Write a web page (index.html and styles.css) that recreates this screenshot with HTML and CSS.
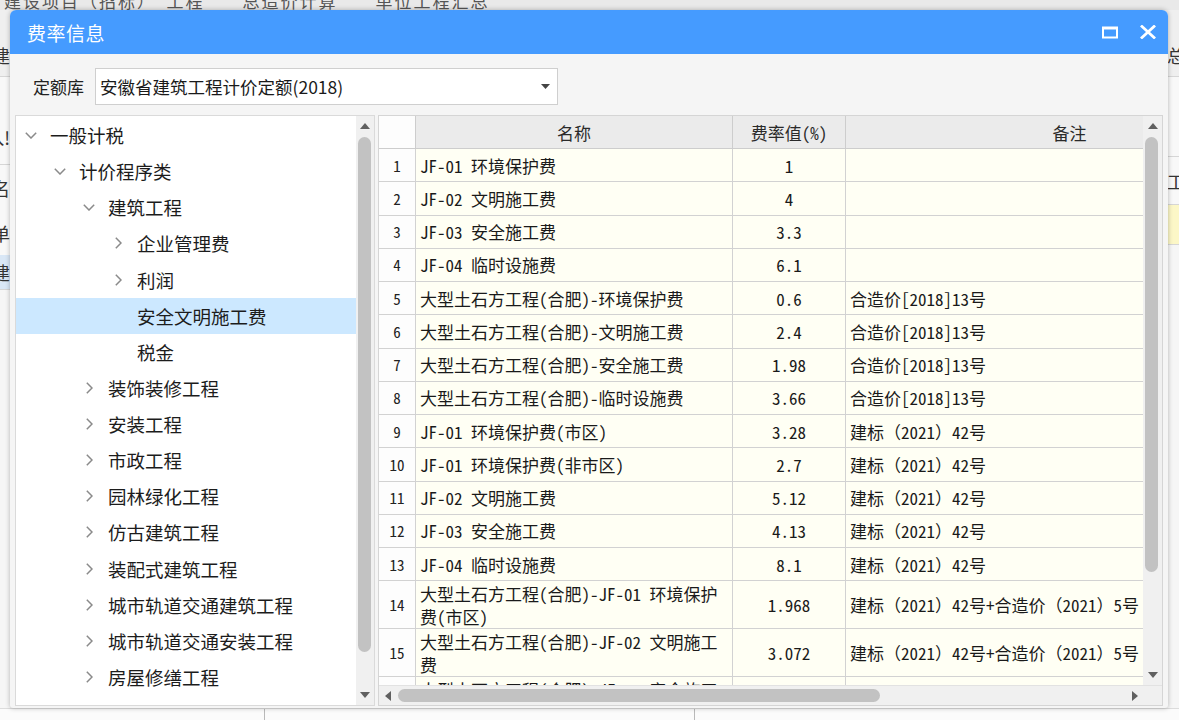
FILE: index.html
```html
<!DOCTYPE html>
<html lang="zh-CN">
<head>
<meta charset="utf-8">
<title>费率信息</title>
<link rel="stylesheet" href="styles.css">
</head>
<body>
<div class="app">
  <div class="app-top"><span class="app-top-text">建设项目（招标）　工程　　总造价计算　　单位工程汇总</span></div>
  <div class="app-mid">
    <div class="app-left">
      <div class="bg-cell h67"><span>总建</span></div>
      <div class="bg-cell h88"><span>导入!</span></div>
      <div class="bg-cell h45"><span>名</span></div>
      <div class="bg-cell h45"><span>单</span></div>
      <div class="bg-cell h35 sel"><span>建</span></div>
      <div class="bg-fill"></div>
    </div>
    <div class="app-right">
      <div class="bg-cell h67 left"><span>总造</span></div>
      <div class="bg-cell h80 left plain"><span></span></div>
      <div class="bg-cell h48 left"><span>工时</span></div>
      <div class="bg-cell h40 yellow left"><span></span></div>
      <div class="bg-fill"></div>
    </div>
  </div>
  <div class="app-bottom"><div class="bb1"></div><div class="bb2"></div><div class="bb3"></div></div>
</div>

<div class="dialog">
  <div class="titlebar">
    <div class="title">费率信息</div>
    <div class="tb-btns">
      <svg class="tb-icon" width="16" height="13" viewBox="0 0 16 13"><rect x="1" y="1.5" width="14" height="10" fill="none" stroke="#fff" stroke-width="2"/><rect x="1" y="1" width="14" height="2.5" fill="#fff"/></svg>
      <svg class="tb-icon" width="16" height="14" viewBox="0 0 16 14"><path d="M2 1.5 L14 12.5 M14 1.5 L2 12.5" stroke="#fff" stroke-width="2.8" stroke-linecap="square"/></svg>
    </div>
  </div>

  <div class="toolbar">
    <span class="label">定额库</span>
    <div class="select">
      <span class="select-text">安徽省建筑工程计价定额(2018)</span>
      <svg width="9" height="5" viewBox="0 0 9 5"><path d="M0 0 H9 L4.5 5 Z" fill="#444"/></svg>
    </div>
  </div>

  <div class="panels">
    <div class="tree">
      <div class="tree-list">
        <div class="node l0"><span class="tw"><svg width="12" height="7" viewBox="0 0 12 7"><polyline points="0.8,0.8 6,6 11.2,0.8" fill="none" stroke="#8a8a8a" stroke-width="1.5"/></svg></span>一般计税</div>
        <div class="node l1"><span class="tw"><svg width="12" height="7" viewBox="0 0 12 7"><polyline points="0.8,0.8 6,6 11.2,0.8" fill="none" stroke="#8a8a8a" stroke-width="1.5"/></svg></span>计价程序类</div>
        <div class="node l2"><span class="tw"><svg width="12" height="7" viewBox="0 0 12 7"><polyline points="0.8,0.8 6,6 11.2,0.8" fill="none" stroke="#8a8a8a" stroke-width="1.5"/></svg></span>建筑工程</div>
        <div class="node l3"><span class="tw"><svg class="chev-r" width="7" height="12" viewBox="0 0 7 12"><polyline points="0.8,0.8 6,6 0.8,11.2" fill="none" stroke="#8a8a8a" stroke-width="1.5"/></svg></span>企业管理费</div>
        <div class="node l3"><span class="tw"><svg class="chev-r" width="7" height="12" viewBox="0 0 7 12"><polyline points="0.8,0.8 6,6 0.8,11.2" fill="none" stroke="#8a8a8a" stroke-width="1.5"/></svg></span>利润</div>
        <div class="node l3 selected"><span class="tw"></span>安全文明施工费</div>
        <div class="node l3"><span class="tw"></span>税金</div>
        <div class="node l2"><span class="tw"><svg class="chev-r" width="7" height="12" viewBox="0 0 7 12"><polyline points="0.8,0.8 6,6 0.8,11.2" fill="none" stroke="#8a8a8a" stroke-width="1.5"/></svg></span>装饰装修工程</div>
        <div class="node l2"><span class="tw"><svg class="chev-r" width="7" height="12" viewBox="0 0 7 12"><polyline points="0.8,0.8 6,6 0.8,11.2" fill="none" stroke="#8a8a8a" stroke-width="1.5"/></svg></span>安装工程</div>
        <div class="node l2"><span class="tw"><svg class="chev-r" width="7" height="12" viewBox="0 0 7 12"><polyline points="0.8,0.8 6,6 0.8,11.2" fill="none" stroke="#8a8a8a" stroke-width="1.5"/></svg></span>市政工程</div>
        <div class="node l2"><span class="tw"><svg class="chev-r" width="7" height="12" viewBox="0 0 7 12"><polyline points="0.8,0.8 6,6 0.8,11.2" fill="none" stroke="#8a8a8a" stroke-width="1.5"/></svg></span>园林绿化工程</div>
        <div class="node l2"><span class="tw"><svg class="chev-r" width="7" height="12" viewBox="0 0 7 12"><polyline points="0.8,0.8 6,6 0.8,11.2" fill="none" stroke="#8a8a8a" stroke-width="1.5"/></svg></span>仿古建筑工程</div>
        <div class="node l2"><span class="tw"><svg class="chev-r" width="7" height="12" viewBox="0 0 7 12"><polyline points="0.8,0.8 6,6 0.8,11.2" fill="none" stroke="#8a8a8a" stroke-width="1.5"/></svg></span>装配式建筑工程</div>
        <div class="node l2"><span class="tw"><svg class="chev-r" width="7" height="12" viewBox="0 0 7 12"><polyline points="0.8,0.8 6,6 0.8,11.2" fill="none" stroke="#8a8a8a" stroke-width="1.5"/></svg></span>城市轨道交通建筑工程</div>
        <div class="node l2"><span class="tw"><svg class="chev-r" width="7" height="12" viewBox="0 0 7 12"><polyline points="0.8,0.8 6,6 0.8,11.2" fill="none" stroke="#8a8a8a" stroke-width="1.5"/></svg></span>城市轨道交通安装工程</div>
        <div class="node l2"><span class="tw"><svg class="chev-r" width="7" height="12" viewBox="0 0 7 12"><polyline points="0.8,0.8 6,6 0.8,11.2" fill="none" stroke="#8a8a8a" stroke-width="1.5"/></svg></span>房屋修缮工程</div>
        <div class="node l1"><span class="tw"></span>增值税类</div>
      </div>
      <div class="vscroll">
        <div class="sb-btn"><svg width="10" height="6" viewBox="0 0 10 6"><path d="M0 6 H10 L5 0 Z" fill="#606060"/></svg></div>
        <div class="sb-track"><div class="thumb-v tree-thumb"></div></div>
        <div class="sb-btn"><svg width="10" height="6" viewBox="0 0 10 6"><path d="M0 0 H10 L5 6 Z" fill="#606060"/></svg></div>
      </div>
    </div>

    <div class="grid">
      <div class="grid-main">
        <div class="grid-view">
          <div class="row head">
            <div class="c num"></div>
            <div class="c name">名称</div>
            <div class="c rate">费率值(%)</div>
            <div class="c note">备注</div>
          </div>
          <div class="row"><div class="c num">1</div><div class="c name">JF-01 环境保护费</div><div class="c rate">1</div><div class="c note"></div></div>
          <div class="row"><div class="c num">2</div><div class="c name">JF-02 文明施工费</div><div class="c rate">4</div><div class="c note"></div></div>
          <div class="row"><div class="c num">3</div><div class="c name">JF-03 安全施工费</div><div class="c rate">3.3</div><div class="c note"></div></div>
          <div class="row"><div class="c num">4</div><div class="c name">JF-04 临时设施费</div><div class="c rate">6.1</div><div class="c note"></div></div>
          <div class="row"><div class="c num">5</div><div class="c name">大型土石方工程(合肥)-环境保护费</div><div class="c rate">0.6</div><div class="c note">合造价[2018]13号</div></div>
          <div class="row"><div class="c num">6</div><div class="c name">大型土石方工程(合肥)-文明施工费</div><div class="c rate">2.4</div><div class="c note">合造价[2018]13号</div></div>
          <div class="row"><div class="c num">7</div><div class="c name">大型土石方工程(合肥)-安全施工费</div><div class="c rate">1.98</div><div class="c note">合造价[2018]13号</div></div>
          <div class="row"><div class="c num">8</div><div class="c name">大型土石方工程(合肥)-临时设施费</div><div class="c rate">3.66</div><div class="c note">合造价[2018]13号</div></div>
          <div class="row"><div class="c num">9</div><div class="c name">JF-01 环境保护费(市区)</div><div class="c rate">3.28</div><div class="c note">建标（2021）42号</div></div>
          <div class="row"><div class="c num">10</div><div class="c name">JF-01 环境保护费(非市区)</div><div class="c rate">2.7</div><div class="c note">建标（2021）42号</div></div>
          <div class="row"><div class="c num">11</div><div class="c name">JF-02 文明施工费</div><div class="c rate">5.12</div><div class="c note">建标（2021）42号</div></div>
          <div class="row"><div class="c num">12</div><div class="c name">JF-03 安全施工费</div><div class="c rate">4.13</div><div class="c note">建标（2021）42号</div></div>
          <div class="row"><div class="c num">13</div><div class="c name">JF-04 临时设施费</div><div class="c rate">8.1</div><div class="c note">建标（2021）42号</div></div>
          <div class="row tall"><div class="c num">14</div><div class="c name">大型土石方工程(合肥)-JF-01 环境保护<br>费(市区)</div><div class="c rate">1.968</div><div class="c note">建标（2021）42号+合造价（2021）5号</div></div>
          <div class="row tall"><div class="c num">15</div><div class="c name">大型土石方工程(合肥)-JF-02 文明施工<br>费</div><div class="c rate">3.072</div><div class="c note">建标（2021）42号+合造价（2021）5号</div></div>
          <div class="row tall"><div class="c num">16</div><div class="c name">大型土石方工程(合肥)-JF-03 安全施工<br>费</div><div class="c rate">2.478</div><div class="c note">建标（2021）42号+合造价（2021）5号</div></div>
        </div>
        <div class="vscroll grid-vs">
          <div class="sb-btn"><svg width="10" height="6" viewBox="0 0 10 6"><path d="M0 6 H10 L5 0 Z" fill="#606060"/></svg></div>
          <div class="sb-track"><div class="thumb-v grid-thumb"></div></div>
          <div class="sb-btn"><svg width="10" height="6" viewBox="0 0 10 6"><path d="M0 0 H10 L5 6 Z" fill="#606060"/></svg></div>
        </div>
      </div>
      <div class="hbar">
        <div class="hscroll">
          <div class="sb-hbtn"><svg width="6" height="10" viewBox="0 0 6 10"><path d="M6 0 V10 L0 5 Z" fill="#606060"/></svg></div>
          <div class="sb-htrack"><div class="thumb-h"></div></div>
          <div class="sb-hbtn"><svg width="6" height="10" viewBox="0 0 6 10"><path d="M0 0 V10 L6 5 Z" fill="#606060"/></svg></div>
        </div>
        <div class="corner"></div>
      </div>
    </div>
  </div>
</div>
</body>
</html>
```
FILE: styles.css
```css
* { box-sizing: border-box; }
html, body {
  margin: 0;
  width: 1179px;
  height: 720px;
  overflow: hidden;
}
body {
  position: relative;
  font-family: "Noto Sans CJK SC", "Noto Sans", sans-serif;
  background: #f2f2f2;
  color: #1a1a1a;
}

/* ---------- background application ---------- */
.app {
  width: 1179px;
  height: 720px;
  display: flex;
  flex-direction: column;
}
.app-top {
  height: 10px;
  overflow: hidden;
  background: #e9e9e9;
  line-height: 2px;
  padding-left: 4px;
}
.app-top-text {
  font-size: 17px;
  color: #555;
  white-space: nowrap;
  letter-spacing: 2px;
}
.app-mid {
  flex: 1;
  display: flex;
  justify-content: space-between;
  min-height: 0;
}
.app-left, .app-right {
  display: flex;
  flex-direction: column;
  overflow: hidden;
}
.app-left { width: 10px; }
.app-right { width: 12px; }
.bg-cell {
  display: flex;
  justify-content: flex-end;
  align-items: center;
  border-bottom: 1px solid #d6d6d6;
  background: #f4f4f4;
  font-size: 18px;
  color: #333;
  white-space: nowrap;
  overflow: hidden;
}
.bg-cell.left { justify-content: flex-start; }
.bg-cell span { flex: none; }
.h67 { height: 67px; align-items: flex-end; padding-bottom: 8px; background: #efefef; }
.h88 { height: 88px; align-items: flex-end; padding-bottom: 14px; background: #f8f8f8; }
.h45 { height: 45px; background: #f8f8f8; border-bottom: none; }
.h35 { height: 35px; }
.h80 { height: 80px; }
.h48 { height: 48px; background: #f8f8f8; }
.h40 { height: 40px; }
.sel { background: #d9e7f6; }
.yellow { background: #fcf7c7; }
.plain { background: #f8f8f8; }
.bg-fill { flex: 1; background: #f6f6f6; }
.app-bottom {
  height: 12px;
  display: flex;
  background: #fbfbfb;
  border-top: 1px solid #dcdcdc;
}
.bb1 { width: 265px; border-right: 1px solid #b9b9b9; }
.bb2 { width: 430px; border-right: 1px solid #b9b9b9; }
.bb3 { flex: 1; }

/* ---------- dialog ---------- */
.dialog {
  position: absolute;
  left: 10px;
  top: 10px;
  width: 1158px;
  height: 698px;
  background: #f5f5f5;
  border-radius: 6px 6px 3px 3px;
  box-shadow: 0 0 5px rgba(0, 0, 0, 0.28);
  display: flex;
  flex-direction: column;
  overflow: hidden;
}
.titlebar {
  height: 44px;
  flex: none;
  background: #459bff;
  display: flex;
  align-items: center;
  padding: 0 12px 0 17px;
  color: #fff;
}
.title {
  flex: 1;
  font-size: 19px;
  letter-spacing: 0.5px;
}
.tb-btns {
  display: flex;
  align-items: center;
  gap: 22px;
}
.tb-icon { display: block; }

.toolbar {
  flex: none;
  display: flex;
  align-items: center;
  padding: 14px 0 10px 23px;
}
.label {
  font-size: 17px;
  color: #222;
  margin-right: 11px;
}
.select {
  width: 463px;
  height: 37px;
  background: #fff;
  border: 1px solid #cfcfcf;
  display: flex;
  align-items: center;
  justify-content: space-between;
  padding: 0 7px 0 4px;
}
.select-text {
  font-size: 17.5px;
  color: #1a1a1a;
}

.panels {
  flex: 1;
  min-height: 0;
  display: flex;
  gap: 3px;
  padding: 0 5px 2px 5px;
}

/* ---------- tree ---------- */
.tree {
  width: 360px;
  background: #fff;
  border: 1px solid #dadada;
  display: flex;
}
.tree-list {
  flex: 1;
  overflow: hidden;
  padding-top: 1px;
}
.node {
  height: 36.13px;
  display: flex;
  align-items: center;
  font-size: 18.5px;
  color: #1c1c1c;
  white-space: nowrap;
}
.node.l0 { padding-left: 9px; }
.node.l1 { padding-left: 38px; }
.node.l2 { padding-left: 67px; }
.node.l3 { padding-left: 96px; }
.node.selected { background: #cce8ff; }
.tw {
  width: 25px;
  flex: none;
  display: flex;
  align-items: center;
}
.tw svg { display: block; }
.tw .chev-r { margin-left: 3px; }

.vscroll {
  width: 18px;
  flex: none;
  background: #f0f0f0;
  display: flex;
  flex-direction: column;
}
.sb-btn {
  height: 20px;
  flex: none;
  display: flex;
  align-items: center;
  justify-content: center;
}
.sb-btn svg { display: block; }
.sb-track {
  flex: 1;
  padding: 1px 2px 0 2px;
}
.thumb-v {
  width: 13px;
  background: #c2c2c2;
  border-radius: 7px;
}
.tree-thumb { height: 515px; }
.grid-thumb { height: 435px; }

/* ---------- grid ---------- */
.grid {
  width: 785px;
  border: 1px solid #d5d5d5;
  background: #f0f0f0;
  display: flex;
  flex-direction: column;
}
.grid-main {
  flex: 1;
  min-height: 0;
  display: flex;
}
.grid-view {
  flex: 1;
  overflow: hidden;
  background: #fff;
}
.grid-vs { width: 19px; }
.row {
  display: grid;
  grid-template-columns: 37px 317px 113px 448px;
  height: 33.25px;
  font-family: "Noto Sans Mono CJK SC", "Noto Sans CJK SC", monospace;
  font-size: 17px;
  color: #1a1a1a;
}
.row.head {
  height: 33px;
  background: #ebebeb;
  color: #2a2a2a;
}
.row.tall { height: 48px; }
.c {
  border-right: 1px solid #d2d2d2;
  border-bottom: 1px solid #d2d2d2;
  display: flex;
  align-items: center;
  padding: 0 4px;
  white-space: nowrap;
  overflow: hidden;
  background: #fffff4;
}
.head .c {
  background: #ebebeb;
  border-color: #cdcdcd;
  justify-content: center;
}
.c.num {
  background: #fdfdfd;
  justify-content: center;
  font-size: 15px;
  color: #222;
  padding: 0;
}
.c.rate { justify-content: center; }
.tall .c.name {
  line-height: 23px;
  white-space: normal;
}

.hbar {
  height: 20px;
  flex: none;
  display: flex;
  border-top: 1px solid #e2e2e2;
}
.hscroll {
  flex: 1;
  display: flex;
  background: #f0f0f0;
}
.sb-hbtn {
  width: 17px;
  flex: none;
  display: flex;
  align-items: center;
  justify-content: center;
}
.sb-htrack {
  flex: 1;
  display: flex;
  align-items: center;
  padding-left: 2px;
}
.thumb-h {
  width: 482px;
  height: 13px;
  background: #c2c2c2;
  border-radius: 7px;
}
.corner {
  width: 19px;
  background: #f0f0f0;
}
```
